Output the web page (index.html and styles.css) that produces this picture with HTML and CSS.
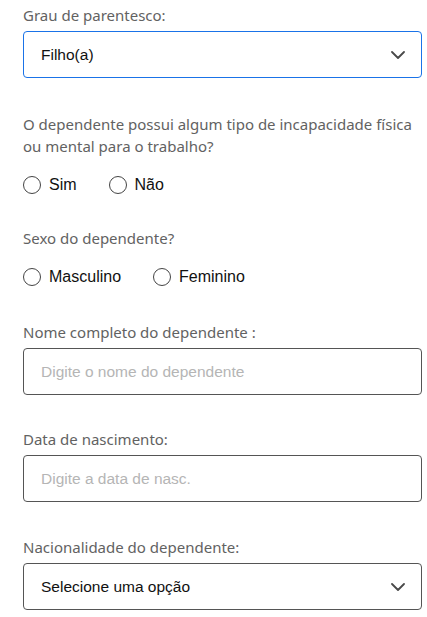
FILE: index.html
```html
<!DOCTYPE html>
<html lang="pt-BR">
<head>
<meta charset="utf-8">
<link rel="stylesheet" href="styles.css">
</head>
<body>
<form class="form">
  <div class="field">
    <label class="label">Grau de parentesco:</label>
    <div class="box box-focus">
      <span class="value">Filho(a)</span>
      <svg class="chev" width="14" height="8" viewBox="0 0 14 8"><path d="M1 1 L7 7 L13 1" fill="none" stroke="#4a4a4a" stroke-width="1.8" stroke-linecap="round" stroke-linejoin="round"/></svg>
    </div>
  </div>

  <div class="field field-q">
    <p class="label">O dependente possui algum tipo de incapacidade física ou mental para o trabalho?</p>
    <div class="radios">
      <span class="radio"><span class="circle"></span>Sim</span>
      <span class="radio"><span class="circle"></span>Não</span>
    </div>
  </div>

  <div class="field field-q2">
    <p class="label">Sexo do dependente?</p>
    <div class="radios">
      <span class="radio"><span class="circle"></span>Masculino</span>
      <span class="radio"><span class="circle"></span>Feminino</span>
    </div>
  </div>

  <div class="field field-n">
    <label class="label">Nome completo do dependente :</label>
    <div class="box"><span class="placeholder">Digite o nome do dependente</span></div>
  </div>

  <div class="field field-d">
    <label class="label">Data de nascimento:</label>
    <div class="box"><span class="placeholder">Digite a data de nasc.</span></div>
  </div>

  <div class="field field-c">
    <label class="label">Nacionalidade do dependente:</label>
    <div class="box">
      <span class="value">Selecione uma opção</span>
      <svg class="chev" width="14" height="8" viewBox="0 0 14 8"><path d="M1 1 L7 7 L13 1" fill="none" stroke="#4a4a4a" stroke-width="1.8" stroke-linecap="round" stroke-linejoin="round"/></svg>
    </div>
  </div>
</form>
</body>
</html>
```
FILE: styles.css
```css
html, body {
  margin: 0;
  padding: 0;
  background: #ffffff;
}
.form {
  width: 399px;
  padding: 4px 0 0 23px;
  display: flex;
  flex-direction: column;
}
.field {
  display: flex;
  flex-direction: column;
}
.field-q { margin-top: 35px; }
.field-q2 { margin-top: 30px; }
.field-n { margin-top: 32px; }
.field-d { margin-top: 33px; }
.field-c { margin-top: 34px; }
.label {
  margin: 0 0 5px 0;
  font-family: "Noto Sans", sans-serif;
  font-size: 15px;
  line-height: 22px;
  color: #626262;
}
.box {
  box-sizing: border-box;
  height: 47px;
  border: 1px solid #555;
  border-radius: 4px;
  display: flex;
  align-items: center;
  justify-content: space-between;
  padding: 0 16px 0 17px;
  font-family: "Liberation Sans", Arial, sans-serif;
  font-size: 15.5px;
}
.box-focus {
  border-color: #1a73e8;
}
.value { color: #111; }
.placeholder { color: #b5b5b5; }
.chev { display: block; }
.radios {
  display: flex;
  align-items: center;
  gap: 32px;
  margin-top: 11px;
  height: 24px;
  font-family: "Liberation Sans", Arial, sans-serif;
  font-size: 16px;
  color: #111;
}
.radio {
  display: flex;
  align-items: center;
}
.circle {
  box-sizing: border-box;
  width: 18px;
  height: 18px;
  border: 1px solid #444;
  border-radius: 50%;
  margin-right: 8px;
}
```
